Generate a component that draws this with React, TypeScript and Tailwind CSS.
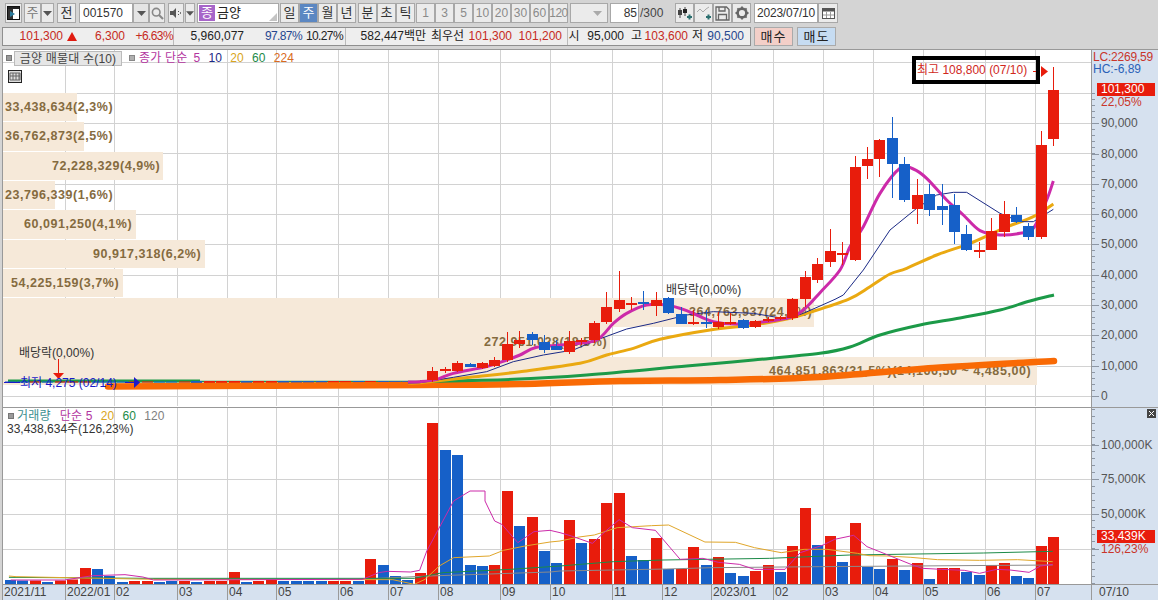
import React from "react";

const FONT = "font-['Liberation_Sans','Noto_Sans_CJK_KR',sans-serif]";
const RED = "#e81c0c";
const BLUE = "#1660c8";
const GRIDV = [65, 114, 177, 227, 276, 338, 388, 438, 500, 550, 612, 662, 711, 773, 823, 873, 923, 985, 1035];
const cx = (i: number) => 10 + 12.42 * i;

// [index, bodyTop, bodyBottom, wickTop, wickBottom, up?]
const C: [number, number, number, number, number, number][] = [
  [34, 371, 380, 367, 382, 1], [35, 369, 371, 367, 373, 1], [36, 363, 371, 361, 372, 1], [37, 364, 367, 363, 367, 0],
  [38, 363, 368, 362, 369, 1], [39, 360, 366, 357, 367, 1], [40, 344, 360, 332, 362, 1], [41, 340, 344, 331, 348, 1],
  [42, 334, 340, 332, 345, 0], [43, 342, 350, 335, 353, 0], [44, 346, 350, 340, 350, 0], [45, 341, 352, 331, 354, 1],
  [46, 340, 342, 338, 345, 1], [47, 323, 340, 321, 343, 1], [48, 307, 322, 292, 324, 1], [49, 300, 309, 271, 312, 1],
  [50, 303, 304, 297, 310, 1], [51, 302, 304, 291, 310, 0], [52, 300, 306, 292, 316, 1], [53, 298, 313, 297, 314, 0],
  [54, 314, 324, 307, 324, 0], [55, 322, 324, 310, 325, 1], [56, 322, 324, 310, 328, 0], [57, 322, 327, 312, 329, 1],
  [58, 322, 324, 313, 325, 1], [59, 320, 328, 319, 329, 0], [60, 321, 327, 320, 328, 1], [61, 319, 321, 317, 322, 1],
  [62, 317, 319, 316, 320, 1], [63, 299, 318, 298, 320, 1], [64, 277, 299, 271, 307, 1], [65, 264, 280, 258, 283, 1],
  [66, 251, 262, 229, 267, 1], [67, 253, 254, 242, 265, 1], [68, 167, 260, 156, 261, 1], [69, 159, 166, 147, 179, 1],
  [70, 140, 159, 139, 177, 1], [71, 138, 164, 117, 198, 0], [72, 164, 200, 157, 202, 0], [73, 195, 209, 179, 224, 1],
  [74, 194, 210, 184, 216, 0], [75, 206, 210, 184, 225, 0], [76, 205, 232, 194, 244, 0], [77, 234, 250, 225, 251, 0],
  [78, 250, 252, 242, 258, 1], [79, 231, 250, 218, 250, 1], [80, 214, 232, 201, 237, 1], [81, 215, 222, 207, 223, 0],
  [82, 226, 237, 223, 240, 0], [83, 145, 237, 131, 239, 1], [84, 90, 139, 67, 146, 1],
];

const VOL: [number, number][] = [
  [4, 0], [3.5, 0], [3.5, 1], [2, 0], [3.5, 1], [4.5, 1], [16, 1], [15, 0], [8, 0], [2, 0], [3, 1], [3, 1], [2, 0], [3, 0], [3, 1], [2, 0], [3, 1],
  [3, 1], [12, 1], [2, 0], [3, 1], [4, 1], [3, 0], [3, 0], [3, 0], [3, 0], [3, 1], [3, 1], [3, 0], [25, 1], [19, 0], [8, 0], [4, 0], [11, 1],
  [161, 1], [134, 0], [129, 0], [19, 0], [18, 0], [19, 1], [93, 1], [58, 0], [67, 1], [33, 0], [21, 0], [64, 1], [41, 0], [45, 1], [81, 1], [91, 1],
  [28, 0], [24, 0], [46, 1], [15, 0], [15, 1], [37, 1], [19, 0], [27, 1], [11, 0], [8, 0], [13, 1], [19, 1], [12, 0], [38, 1], [76, 1], [39, 0],
  [48, 1], [22, 0], [61, 1], [17, 0], [15, 0], [25, 1], [14, 0], [21, 1], [5, 0], [16, 1], [16, 1], [12, 0], [9, 0], [19, 1], [21, 1], [8, 0], [6, 0], [38, 1], [47, 1],
];

const pts = (a: number[][]) => a.map((p) => p.join(",")).join(" ");
const smooth = (a: number[][]) => {
  let d = `M${a[0][0]},${a[0][1]}`;
  for (let i = 0; i < a.length - 1; i++) {
    const p0 = a[Math.max(i - 1, 0)];
    const p1 = a[i];
    const p2 = a[i + 1];
    const p3 = a[Math.min(i + 2, a.length - 1)];
    d += ` C${p1[0] + (p2[0] - p0[0]) / 6},${p1[1] + (p2[1] - p0[1]) / 6} ${p2[0] - (p3[0] - p1[0]) / 6},${p2[1] - (p3[1] - p1[1]) / 6} ${p2[0]},${p2[1]}`;
  }
  return d;
};
const z4 = (a: number[][]) => a.map(([x, y]) => [420 + x / 3, 260 + y / 3]);
const z8 = (a: number[][]) => a.map(([x, y]) => [820 + x / 3, 100 + y / 3]);
const z6 = (a: number[][]) => a.map(([x, y]) => [x / 2.8, 500 + y / 3]);
const z7 = (a: number[][]) => a.map(([x, y]) => [560 + x / 2.622, 400 + y / 3]);

const magenta = [
  [408, 382],
  ...z4([[0, 365], [50, 358], [100, 340], [200, 320], [260, 300], [300, 285], [350, 262], [450, 253], [530, 240], [580, 190], [620, 160], [680, 135], [740, 135], [800, 152], [880, 185], [960, 192], [1100, 175], [1150, 150]]),
  ...z8([[0, 578], [60, 510], [90, 440], [130, 380], [180, 280], [240, 205], [280, 207], [320, 235], [380, 300], [430, 345], [480, 392], [540, 405], [600, 400], [640, 385], [680, 300], [700, 243]]),
];
const navy = [
  [408, 383],
  ...z4([[0, 368], [100, 352], [200, 335], [280, 305], [370, 285], [460, 270], [530, 240], [620, 207], [700, 190], [800, 165], [880, 155], [1000, 160], [1100, 177], [1150, 160]]),
  [820, 306],
  ...z8([[45, 598], [70, 585], [130, 510], [210, 390], [290, 325], [350, 285], [400, 277], [440, 277], [540, 340], [600, 365], [640, 365], [700, 328]]),
];
const yellow = [
  [408, 383],
  ...z4([[0, 368], [150, 352], [300, 335], [480, 310], [560, 285], [640, 265], [720, 238], [870, 210], [1000, 195], [1100, 177], [1160, 160]]),
  ...z8([[85, 598], [150, 560], [210, 522], [260, 505], [350, 465], [450, 430], [550, 385], [640, 350], [700, 312]]),
];
const green = [
  [420, 381.5],
  ...z4([[280, 358], [500, 345], [800, 318], [1000, 300], [1200, 280]]),
  [850, 347], [880, 335], [920, 325], [960, 318], [1000, 310], [1030, 301], [1054, 295],
];
const orange = [[108, 386.5], [420, 385], [520, 384], [620, 381], [720, 380], [820, 377], [933, 368], [1054, 361]];

const vMagenta = [
  ...z6([[30, 237], [180, 237], [260, 224], [350, 221], [400, 228], [430, 237], [1015, 235], [1060, 215], [1085, 211], [1150, 213], [1175, 208], [1195, 150], [1270, 0]]),
  [470, 490], [485, 490],
  ...z6([[1358, 0], [1385, 60], [1405, 70], [1450, 125], [1495, 92], [1540, 88]]),
  ...z7([[0, 395], [30, 405], [85, 427], [120, 390], [155, 356], [190, 380], [250, 388], [315, 475], [375, 472], [415, 484], [470, 490], [510, 505], [590, 505], [630, 455], [690, 432], [720, 415], [770, 403], [805, 437], [860, 462], [920, 490], [950, 502], [1000, 505], [1060, 508], [1100, 517], [1145, 505], [1180, 507], [1230, 514], [1260, 495], [1292, 490]]),
];
const vYellow = [
  ...z6([[25, 225], [45, 227], [430, 235], [1100, 236], [1160, 250], [1190, 235], [1230, 195], [1270, 170], [1370, 165], [1410, 148], [1470, 135], [1540, 123]]),
  ...z7([[0, 420], [50, 408], [90, 402], [150, 380], [240, 374], [285, 372], [380, 423], [460, 424], [510, 440], [580, 455], [640, 445], [700, 445], [780, 457], [810, 464], [860, 465], [920, 469], [990, 476], [1100, 478], [1200, 476], [1292, 482]]),
];
const vGreen = [
  ...z6([[25, 229], [420, 232], [1160, 232], [1240, 215], [1430, 205], [1540, 197]]),
  ...z7([[0, 495], [140, 482], [270, 477], [550, 472], [760, 462], [1110, 456], [1292, 451]]),
];
const vGray = [
  ...z6([[430, 234], [1000, 235], [1200, 225], [1540, 213]]),
  ...z7([[0, 510], [140, 507], [280, 504], [400, 500], [680, 497], [1292, 492]]),
];

const PROFILE = [
  { w: 74, h: 28, g: 1, p: 2, t: "33,438,634(2,3%)" },
  { w: 81, h: 29, g: 1, p: 2, t: "36,762,873(2,5%)" },
  { w: 160, h: 28, g: 1, p: 49, t: "72,228,329(4,9%)" },
  { w: 52, h: 28, g: 1, p: 2, t: "23,796,339(1,6%)" },
  { w: 133, h: 29, g: 1, p: 21, t: "60,091,250(4,1%)" },
  { w: 202, h: 28, g: 1, p: 90, t: "90,917,318(6,2%)" },
  { w: 120, h: 28, g: 1, p: 8, t: "54,225,159(3,7%)" },
  { w: 811, h: 29, g: 0, p: 686, t: "364,763,937(24,7%)" },
  { w: 607, h: 30, g: 0, p: 481, t: "272,951,028(18,5%)" },
  { w: 1034, h: 28, g: 0, p: 766, t: "464,851,863(31,5%)(14,166,50 ~ 4,485,00)" },
];

function Btn({ className = "", children }: { className?: string; children?: React.ReactNode }) {
  return (
    <div className={`h-[20px] flex items-center justify-center border border-[#a8a8a8] bg-[#ebebeb] text-[13px] text-[#333] shrink-0 ${className}`}>
      {children}
    </div>
  );
}

const Caret = ({ c = "#555" }: { c?: string }) => (
  <svg width="9" height="5" viewBox="0 0 9 5"><polygon points="0,0 9,0 4.5,5" fill={c} /></svg>
);

function Toolbar() {
  return (
    <div className="h-[26px] pt-[3px] pl-[5px] flex items-start shrink-0">
      <Btn className="w-[17px]">
        <svg width="13" height="14" viewBox="0 0 13 14">
          <rect x="0.5" y="0.5" width="12" height="13" fill="#fff" stroke="#111" />
          <rect x="1" y="3" width="5" height="10" fill="#333" />
          <rect x="1" y="1" width="11" height="2" fill="#222" />
          <polygon points="3,5 8,8 3,11" fill="#2b7a9b" />
        </svg>
      </Btn>
      <Btn className="w-[17px] ml-[2px] !text-[#777]">주</Btn>
      <Btn className="w-[13px]"><Caret /></Btn>
      <Btn className="w-[19px] ml-[3px]">전</Btn>
      <Btn className="w-[54px] ml-[3px] !bg-white !justify-start pl-[3px] !text-[12px]">001570</Btn>
      <Btn className="w-[16px] !bg-[#e4e4e4]"><Caret /></Btn>
      <Btn className="w-[16px]">
        <svg width="13" height="13" viewBox="0 0 13 13" fill="none" stroke="#888" strokeWidth="1.6">
          <circle cx="5.2" cy="5.2" r="3.8" />
          <path d="M8 8l4 4" strokeWidth="2.2" />
        </svg>
      </Btn>
      <Btn className="w-[16px] ml-[3px]">
        <svg width="12" height="12" viewBox="0 0 12 12">
          <polygon points="0,4 3,4 6,1 6,11 3,8 0,8" fill="#555" />
          <rect x="8" y="4" width="1" height="1" fill="#555" />
          <rect x="8" y="7" width="1" height="1" fill="#555" />
          <rect x="10" y="5" width="1" height="2" fill="#777" />
        </svg>
      </Btn>
      <Btn className="w-[10px] ml-[1px]"><Caret /></Btn>
      <div className="h-[20px] w-[82px] ml-[2px] flex items-center border border-[#a8a8a8] bg-white relative shrink-0">
        <div className="w-[16px] h-[16px] ml-[1px] bg-[#a765c9] text-white text-[13px] leading-[16px] text-center">종</div>
        <span className="ml-[2px] text-[13px] text-[#222]">금양</span>
        <svg className="absolute right-[1px] bottom-[1px]" width="8" height="8" viewBox="0 0 8 8"><polygon points="8,0 8,8 0,8" fill="#c4c4c4" /></svg>
      </div>
      <Btn className="w-[19px] ml-[1px]">일</Btn>
      <Btn className="w-[19px] !bg-[#5b87c2] !text-white">주</Btn>
      <Btn className="w-[19px]">월</Btn>
      <Btn className="w-[19px]">년</Btn>
      <Btn className="w-[19px] ml-[2px]">분</Btn>
      <Btn className="w-[19px]">초</Btn>
      <Btn className="w-[19px]">틱</Btn>
      <Btn className="w-[19px] ml-[1px] !text-[#8a8a8a] !text-[12px]">1</Btn>
      <Btn className="w-[19px] !text-[#8a8a8a] !text-[12px]">3</Btn>
      <Btn className="w-[19px] !text-[#8a8a8a] !text-[12px]">5</Btn>
      <Btn className="w-[19px] !text-[#8a8a8a] !text-[12px]">10</Btn>
      <Btn className="w-[19px] !text-[#8a8a8a] !text-[12px]">20</Btn>
      <Btn className="w-[19px] !text-[#8a8a8a] !text-[12px]">30</Btn>
      <Btn className="w-[19px] !text-[#8a8a8a] !text-[12px]">60</Btn>
      <Btn className="w-[19px] !text-[#8a8a8a] !text-[12px] tracking-[-0.5px]">120</Btn>
      <Btn className="w-[38px] ml-[2px] !justify-end pr-[5px]"><Caret c="#aaa" /></Btn>
      <Btn className="w-[29px] ml-[2px] !bg-white !justify-end pr-[1px] !text-[12px]">85</Btn>
      <span className="ml-[1px] w-[35px] h-[20px] leading-[20px] text-[12px] text-[#444]">/300</span>
      <Btn className="w-[19px]">
        <svg width="16" height="15" viewBox="0 0 16 15">
          <path d="M3 2v10M8 1v9" stroke="#444" />
          <rect x="1" y="4" width="4" height="5" fill="#444" />
          <rect x="6" y="3" width="4" height="4" fill="#222" />
          <path d="M10 11h5M12.5 8.5v5" stroke="#2b6f6f" strokeWidth="2" />
        </svg>
      </Btn>
      <Btn className="w-[19px]">
        <svg width="16" height="15" viewBox="0 0 16 15" fill="none">
          <path d="M1 6l3-3 3 3 3-3 3-2" stroke="#aaa" />
          <path d="M10 11h5M12.5 8.5v5" stroke="#2b6f6f" strokeWidth="2" />
        </svg>
      </Btn>
      <Btn className="w-[19px]">
        <svg width="15" height="15" viewBox="0 0 15 15" fill="none" stroke="#666" strokeWidth="1.3">
          <path d="M1 1h10.5L14 3.5V14H1z" />
          <path d="M4 1v4h6V1M3.5 14V8.5h8V14" />
        </svg>
      </Btn>
      <Btn className="w-[19px]">
        <svg width="14" height="14" viewBox="0 0 14 14">
          <circle cx="7" cy="7" r="4.4" fill="none" stroke="#666" strokeWidth="2.6" />
          <path d="M7 0.5v2.5M7 11v2.5M0.5 7H3M11 7h2.5M2.4 2.4l1.8 1.8M9.8 9.8l1.8 1.8M2.4 11.6l1.8-1.8M9.8 4.2l1.8-1.8" stroke="#666" strokeWidth="1.8" />
        </svg>
      </Btn>
      <Btn className="w-[64px] ml-[3px] !bg-white !text-[12px] tracking-[-0.2px]">2023/07/10</Btn>
      <Btn className="w-[20px]">
        <svg width="13" height="11" viewBox="0 0 13 11">
          <rect x="0.5" y="0.5" width="12" height="10" fill="#fff" stroke="#555" />
          <rect x="0.5" y="0.5" width="12" height="3" fill="#555" />
          <path d="M4.5 4v6M8.5 4v6M1 7h11" stroke="#999" />
        </svg>
      </Btn>
    </div>
  );
}

function Quote() {
  return (
    <div className="h-[19px] mt-[1px] pl-[2px] flex items-stretch shrink-0 text-[12px] leading-[17px] text-[#222]">
      <div className="w-[749px] flex border border-[#8f8f8f] bg-[#eeeeee]">
        <div className="w-[171px] flex border-r border-[#bbb] text-[#c62a22]">
          <span className="w-[60px] text-right">101,300</span>
          <svg className="ml-[4px] mt-[4px]" width="10" height="9" viewBox="0 0 10 9"><polygon points="5,0 10,9 0,9" fill="#e01b10" /></svg>
          <span className="w-[48px] text-right">6,300</span>
          <span className="w-[48px] text-right tracking-[-0.6px]">+6.63%</span>
        </div>
        <div className="w-[172px] flex border-r border-[#bbb]">
          <span className="w-[70px] text-right">5,960,077</span>
          <span className="w-[58px] text-right text-[#27478f] tracking-[-0.6px]">97.87%</span>
          <span className="w-[41px] text-right tracking-[-0.6px]">10.27%</span>
        </div>
        <div className="w-[222px] flex border-r border-[#bbb]">
          <span className="w-[80px] text-right">582,447백만</span>
          <span className="ml-[5px] w-[36px]">최우선</span>
          <span className="w-[45px] text-right text-[#c62a22]">101,300</span>
          <span className="w-[50px] text-right text-[#c62a22]">101,200</span>
        </div>
        <div className="flex-1 flex">
          <span className="w-[12px] text-center">시</span>
          <span className="w-[44px] text-right">95,000</span>
          <span className="w-[18px] text-right">고</span>
          <span className="w-[46px] text-right text-[#c62a22]">103,600</span>
          <span className="w-[15px] text-right">저</span>
          <span className="w-[41px] text-right text-[#27478f]">90,500</span>
        </div>
      </div>
      <div className="w-[39px] ml-[3px] border border-[#aaa] bg-[#f3cfc8] text-center text-[13px] tracking-[1px]">매수</div>
      <div className="w-[39px] ml-[4px] border border-[#aaa] bg-[#c6dcf2] text-center text-[13px] tracking-[1px]">매도</div>
    </div>
  );
}

function Candles({ from, to }: { from: number; to: number }) {
  return (
    <>
      {C.filter((c) => c[0] >= from && c[0] <= to).map(([i, t, b, wt, wb, up]) => {
        const col = up ? RED : BLUE;
        const x = Math.round(cx(i));
        return (
          <g key={i}>
            <line x1={x + 0.5} x2={x + 0.5} y1={wt} y2={wb} stroke={col} strokeWidth="1" />
            <rect x={x - 5} y={t} width="11" height={Math.max(b - t, 2)} fill={col} />
          </g>
        );
      })}
    </>
  );
}

function PricePane() {
  const hs = Array.from({ length: 12 }, (_, k) => Math.round(396 - 30.33 * k));
  return (
    <div className="relative flex-1 overflow-hidden">
      <svg className="absolute inset-0" width="1088" height="356" viewBox="3 50 1088 356">
        {GRIDV.map((x) => <line key={x} x1={x + 0.5} x2={x + 0.5} y1="50" y2="406" stroke="#d2d2d2" />)}
        {hs.map((y) => <line key={y} x1="3" x2="1091" y1={y + 0.5} y2={y + 0.5} stroke="#d2d2d2" />)}
      </svg>
      <div className={`absolute inset-x-0 top-[43px] flex flex-col items-start ${FONT}`}>
        {PROFILE.map((r) => (
          <div
            key={r.t}
            className="bg-[#f6e9d9] flex items-center whitespace-nowrap text-[12.5px] font-bold text-[#856b3f] tracking-[0.55px]"
            style={{ width: r.w, height: r.h, marginBottom: r.g, paddingLeft: r.p }}
          >
            {r.t}
          </div>
        ))}
      </div>
      <svg className="absolute inset-0" width="1088" height="356" viewBox="3 50 1088 356" fill="none">
        <line x1="8" x2="200" y1="381" y2="381" stroke="#1c9a48" strokeWidth="3" />
        <line x1="200" x2="420" y1="381.5" y2="381.5" stroke="#1c9a48" strokeWidth="1.5" />
        {VOL.slice(0, 34).map(([, u], i) => (
          <rect key={i} x={Math.round(cx(i)) - 5} y="381" width="11" height="2" fill={u ? RED : BLUE} opacity={i < 15 ? 0.55 : 1} />
        ))}
        <path d={smooth(orange)} stroke="#f96a05" strokeWidth="6.5" strokeLinecap="round" />
        <path d={smooth(green)} stroke="#1c9a48" strokeWidth="3" />
        <path d={smooth(yellow)} stroke="#eaa911" strokeWidth="3" />
        <polyline points={pts(navy)} stroke="#1b2a86" strokeWidth="1" />
        <path d={smooth(magenta)} stroke="#cc2aa9" strokeWidth="3" />
        <Candles from={34} to={84} />
        <line x1="1033" x2="1040" y1="71.5" y2="71.5" stroke={RED} />
        <polygon points="1041,66 1048,71.5 1041,77" fill={RED} />
        <line x1="58.5" x2="58.5" y1="359" y2="374" stroke={RED} />
        <polygon points="53,373 64,373 58.5,379" fill={RED} />
        <line x1="4" x2="20" y1="382.5" y2="382.5" stroke="#1a1ac8" />
        <line x1="125" x2="136" y1="382.5" y2="382.5" stroke="#1a1ac8" />
        <polygon points="134,377 140,382.5 134,388" fill="#1a1ac8" />
      </svg>
      <div className="absolute left-[3px] top-[1px] flex items-center h-[14px] text-[12px] leading-[14px] tracking-[0.2px]">
        <span className="w-[6px] h-[6px] bg-[#9a9a9a] border border-[#777]" />
        <span className="ml-[2px] w-[108px] h-[15px] bg-[#e6e6e6] border border-[#bbb] text-center text-[#444]">금양 매물대 수(10)</span>
        <span className="ml-[7px] w-[6px] h-[6px] bg-[#b0b0b0] border border-[#888]" />
        <span className="ml-[4px] text-[#b3359f]">종가 단순</span>
        <span className="ml-[6px] text-[#b3359f]">5</span>
        <span className="ml-[8px] text-[#1b2a86]">10</span>
        <span className="ml-[8px] text-[#d9a520]">20</span>
        <span className="ml-[8px] text-[#1c8a48]">60</span>
        <span className="ml-[8px] text-[#d86a20]">224</span>
      </div>
      <svg className="absolute left-[5px] top-[20px]" width="14" height="13" viewBox="0 0 14 13">
        <rect x="0.5" y="0.5" width="13" height="12" fill="#ddd" stroke="#222" />
        <path d="M2 3h10v7H2zM5 3v7M8 3v7M11 3v7M2 6h10" stroke="#666" fill="none" />
      </svg>
      <div className="absolute left-[909px] top-[6px] w-[128px] h-[28px] border-[4px] border-black text-[12px] leading-[20px] text-[#d0281c] pl-[1px] whitespace-nowrap">최고 108,800 (07/10)</div>
      <span className="absolute left-[663px] top-[231px] text-[12px] text-[#333] whitespace-nowrap">배당락(0,00%)</span>
      <span className="absolute left-[16px] top-[294px] text-[12px] text-[#333] whitespace-nowrap">배당락(0,00%)</span>
      <span className="absolute left-[17px] top-[324px] text-[12px] text-[#1a1ac8] whitespace-nowrap">최저 4,275 (02/14)</span>
    </div>
  );
}

function VolumePane() {
  return (
    <div className="relative h-[176px] overflow-hidden">
      <svg className="absolute inset-0" width="1088" height="176" viewBox="3 407 1088 176" fill="none">
        {GRIDV.map((x) => <line key={x} x1={x + 0.5} x2={x + 0.5} y1="407" y2="583" stroke="#d2d2d2" />)}
        {[444, 478, 513, 548].map((y) => <line key={y} x1="3" x2="1091" y1={y + 0.5} y2={y + 0.5} stroke="#d2d2d2" />)}
        {VOL.map(([h, u], i) => (
          <rect key={i} x={Math.round(cx(i)) - 5} y={583 - h} width="11" height={h} fill={u ? RED : BLUE} />
        ))}
        <polyline points={pts(vGray)} stroke="#8a8a8a" />
        <polyline points={pts(vGreen)} stroke="#1c8a48" />
        <polyline points={pts(vYellow)} stroke="#e0a62a" />
        <polyline points={pts(vMagenta)} stroke="#cc2aa9" />
      </svg>
      <div className="absolute left-[5px] top-[1px] flex items-center h-[14px] text-[12px] leading-[14px] tracking-[0.2px]">
        <span className="w-[6px] h-[6px] bg-[#9a9a9a] border border-[#777]" />
        <span className="ml-[3px] text-[#3a8f8f]">거래량</span>
        <span className="ml-[9px] text-[#b3359f]">단순 5</span>
        <span className="ml-[8px] text-[#d9a520]">20</span>
        <span className="ml-[8px] text-[#1c8a48]">60</span>
        <span className="ml-[8px] text-[#808080]">120</span>
      </div>
      <div className="absolute left-[4px] top-[14px] text-[12px] leading-[14px] text-[#333] whitespace-nowrap">33,438,634주(126,23%)</div>
    </div>
  );
}

function AxisTicks({ h, items, minor }: { h: number; items: number[]; minor: number[] }) {
  return (
    <svg className="absolute inset-0" width="67" height={h}>
      {minor.map((y, i) => <line key={i} x1="0" x2="3" y1={y + 0.5} y2={y + 0.5} stroke="#8d97a5" />)}
      {items.map((y, i) => <line key={i} x1="0" x2="7" y1={y + 0.5} y2={y + 0.5} stroke="#8d97a5" />)}
    </svg>
  );
}

function PriceAxis() {
  const labels: [string, string][] = [
    ["90,000", "top-[66px]"], ["80,000", "top-[97px]"], ["70,000", "top-[127px]"], ["60,000", "top-[157px]"], ["50,000", "top-[187px]"],
    ["40,000", "top-[218px]"], ["30,000", "top-[248px]"], ["20,000", "top-[278px]"], ["10,000", "top-[309px]"],
  ];
  const majors = [73, 104, 134, 164, 194, 225, 255, 285, 316, 346];
  const minor = Array.from({ length: 56 }, (_, k) => Math.round(346 - 6.07 * k)).filter((y) => y > 36);
  return (
    <div className="relative flex-1 overflow-hidden text-[12px] leading-[14px] text-[#555]">
      <AxisTicks h={356} items={majors} minor={minor} />
      <div className="absolute left-[1px] top-0 text-[#c9352a] whitespace-nowrap tracking-[-0.2px]">LC:2269,59</div>
      <div className="absolute left-[1px] top-[12px] text-[#2a62b8] whitespace-nowrap">HC:-6,89</div>
      <div className="absolute left-[5px] top-[33px] w-[58px] h-[13px] bg-[#e81c0c] text-white pl-[4px] leading-[13px]">101,300</div>
      <div className="absolute left-[9px] top-[45px] text-[#c9352a]">22,05%</div>
      {labels.map(([t, c]) => <span key={t} className={`absolute left-[9px] ${c}`}>{t}</span>)}
      <span className="absolute left-[9px] top-[339px]">0</span>
    </div>
  );
}

function VolAxis() {
  const minor = Array.from({ length: 26 }, (_, k) => Math.round(175 - 6.95 * k));
  return (
    <div className="relative h-[176px] overflow-hidden text-[12px] leading-[14px] text-[#555]">
      <AxisTicks h={176} items={[37, 71, 106, 141]} minor={minor} />
      <div className="absolute right-[2px] top-[1px] w-[9px] h-[9px] bg-[#444] text-white flex items-center justify-center">
        <svg width="7" height="7" viewBox="0 0 7 7"><path d="M1 1l5 5M6 1l-5 5" stroke="#fff" /></svg>
      </div>
      <span className="absolute left-[9px] top-[30px]">100,000K</span>
      <span className="absolute left-[9px] top-[64px]">75,000K</span>
      <span className="absolute left-[9px] top-[99px]">50,000K</span>
      <div className="absolute left-[5px] top-[122px] w-[58px] h-[13px] bg-[#e81c0c] text-white pl-[4px] leading-[13px]">33,439K</div>
      <span className="absolute left-[9px] top-[134px] text-[#c9352a]">126,23%</span>
    </div>
  );
}

function DateAxis() {
  const L: [number, string][] = [
    [3, "2021/11"], [65, "2022/01"], [114, "02"], [177, "03"], [227, "04"], [276, "05"], [338, "06"], [388, "07"], [438, "08"], [500, "09"],
    [550, "10"], [612, "11"], [662, "12"], [711, "2023/01"], [773, "02"], [823, "03"], [873, "04"], [923, "05"], [985, "06"], [1035, "07"], [1091, "07/10"],
  ];
  const widths = L.map(([x], i) => (i < L.length - 1 ? L[i + 1][0] - x : 1158 - x));
  return (
    <div className="h-[16px] flex bg-[#d6e1ef] border-t border-[#999] text-[12px] leading-[15px] text-[#444] shrink-0">
      {L.map(([, t], i) => (
        <div
          key={i}
          className={`shrink-0 border-[#9a9a9a] ${i > 0 ? "border-l" : ""} ${i === L.length - 1 ? "pl-[7px]" : "pl-[1px]"}`}
          style={{ width: widths[i] }}
        >
          {t}
        </div>
      ))}
    </div>
  );
}

export default function App() {
  return (
    <div className={`w-[1158px] h-[600px] flex flex-col overflow-hidden bg-[#d4d4d4] ${FONT}`}>
      <Toolbar />
      <Quote />
      <div className="h-[3px] shrink-0" />
      <div className="flex-1 flex flex-col ml-[2px] border-l border-t border-[#999] bg-white min-h-0">
        <div className="flex flex-1 min-h-0">
          <div className="w-[1088px] flex flex-col shrink-0">
            <PricePane />
            <div className="h-[1px] bg-[#999]" />
            <VolumePane />
          </div>
          <div className="flex-1 flex flex-col bg-[#d6e1ef] border-l border-[#999]">
            <PriceAxis />
            <div className="h-[1px] bg-[#999]" />
            <VolAxis />
          </div>
        </div>
        <DateAxis />
      </div>
    </div>
  );
}
